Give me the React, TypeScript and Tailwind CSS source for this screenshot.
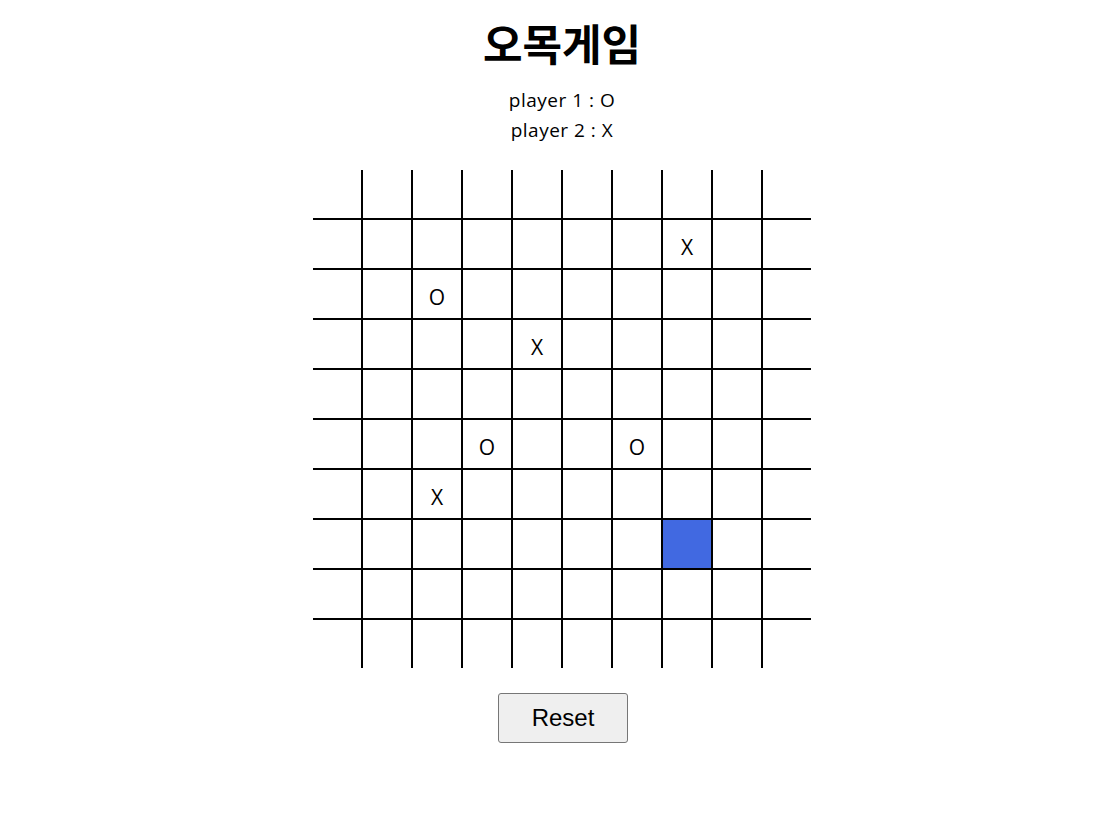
import { useState } from "react";

const SIZE = 10;

// initial stones on the board
const initialStones: Record<string, string> = {
  "1-7": "X",
  "2-2": "O",
  "3-4": "X",
  "5-3": "O",
  "5-6": "O",
  "6-2": "X",
};

const App = () => {
  const [stones, setStones] = useState<Record<string, string>>(initialStones);
  const [turn, setTurn] = useState("O");
  const selected = "7-7";

  const place = (key: string) => {
    if (stones[key]) return;
    setStones({ ...stones, [key]: turn });
    setTurn(turn === "O" ? "X" : "O");
  };

  return (
    <div className="min-h-screen bg-white pl-[25px] flex flex-col items-center text-black font-['Open_Sans','Noto_Sans_CJK_KR',sans-serif]">
      <h1 className="mt-[18px] text-[43px] leading-[48px] font-bold font-['Noto_Sans_CJK_KR',sans-serif]">오목게임</h1>
      <div className="mt-[19px] flex flex-col items-center text-[19px] leading-[30px] tracking-[0.5px]">
        <p>player 1 : O</p>
        <p>player 2 : X</p>
      </div>

      <div className="mt-[25px] grid grid-cols-[repeat(10,50px)] w-[498px] h-[498px] overflow-hidden">
        {Array.from({ length: SIZE * SIZE }).map((_, i) => {
          const r = Math.floor(i / SIZE);
          const c = i % SIZE;
          const key = `${r}-${c}`;
          return (
            <div
              key={key}
              onClick={() => place(key)}
              className={`w-[50px] h-[50px] pt-[7px] border-r-2 border-b-2 border-black flex items-center justify-center text-[21px] ${
                key === selected ? "bg-[#4169e1]" : ""
              }`}
            >
              {stones[key]}
            </div>
          );
        })}
      </div>

      <button
        onClick={() => {
          setStones({});
          setTurn("O");
        }}
        className="mt-[25px] ml-[2px] w-[130px] h-[50px] bg-[#efefef] border border-[#767676] rounded-[3px] text-[24px] font-['Liberation_Sans',Arial,sans-serif]"
      >
        Reset
      </button>
    </div>
  );
};

export default App;
